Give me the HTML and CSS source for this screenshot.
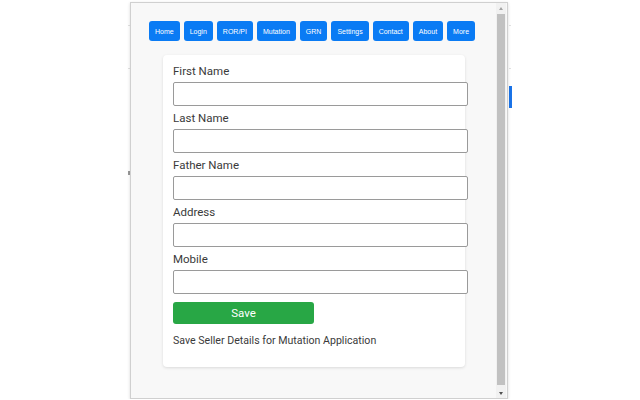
FILE: index.html
```html
<!DOCTYPE html>
<html>
<head>
  <meta charset="utf-8">
  <title>Mutation - Seller Details</title>
  <link rel="stylesheet" href="styles.css">
</head>

<body>
  <!-- bits of the page behind the popup -->
  <div class="bg-mark mark-l1"></div>
  <div class="bg-mark mark-l2"></div>
  <div class="bg-mark mark-l3"></div>
  <div class="bg-mark mark-r1"></div>
  <div class="bg-mark mark-r2"></div>
  <div class="bg-tab"></div>

  <div class="popup">
    <div class="popup-body">
      <nav class="nav">
        <button class="nav-btn">Home</button>
        <button class="nav-btn">Login</button>
        <button class="nav-btn">ROR/PI</button>
        <button class="nav-btn">Mutation</button>
        <button class="nav-btn">GRN</button>
        <button class="nav-btn">Settings</button>
        <button class="nav-btn">Contact</button>
        <button class="nav-btn">About</button>
        <button class="nav-btn">More</button>
      </nav>

      <form class="card" id="seller-form">
        <div class="form-group">
          <label for="first-name">First Name</label>
          <input type="text" id="first-name" name="firstName">
        </div>
        <div class="form-group">
          <label for="last-name">Last Name</label>
          <input type="text" id="last-name" name="lastName">
        </div>
        <div class="form-group">
          <label for="father-name">Father Name</label>
          <input type="text" id="father-name" name="fatherName">
        </div>
        <div class="form-group">
          <label for="address">Address</label>
          <input type="text" id="address" name="address">
        </div>
        <div class="form-group">
          <label for="mobile">Mobile</label>
          <input type="text" id="mobile" name="mobile">
        </div>

        <button type="submit" class="save-btn">Save</button>
        <div class="note">Save Seller Details for Mutation Application</div>
      </form>
    </div>

    <div class="scrollbar">
      <div class="arrow arrow-up"></div>
      <div class="thumb"></div>
      <div class="arrow arrow-down"></div>
    </div>
  </div>
</body>
</html>
```

FILE: styles.css
```css
body {
  margin: 0;
  padding: 2px 0 0 130px;
  background-color: white;
  font-family: Roboto, "Liberation Sans", Arial, sans-serif;
  color: #333;
}

.bg-mark {
  position: absolute;
  width: 2px;
  height: 1px;
  background-color: #e2e2e2;
}

.mark-l1 { left: 128px; top: 25px; }
.mark-l2 { left: 128px; top: 68px; }
.mark-l3 { left: 128px; top: 171px; height: 4px; background-color: #999; }
.mark-r1 { left: 509px; top: 25px; }
.mark-r2 { left: 509px; top: 68px; }

.bg-tab {
  position: absolute;
  left: 509px;
  top: 86px;
  width: 3px;
  height: 22px;
  background-color: #1a73e8;
}

.popup {
  position: relative;
  display: flex;
  width: 376px;
  height: 395px;
  background-color: #f8f8f8;
  border: 1px solid #d0d0d0;
  box-shadow: 0 1px 3px rgba(0, 0, 0, 0.15);
}

.popup-body {
  flex: 1;
  padding-top: 18px;
  overflow: hidden;
}

.nav {
  display: flex;
  gap: 4px;
  margin-left: 18px;
}

.nav-btn {
  height: 20px;
  padding: 0 6px;
  border: none;
  border-radius: 3px;
  background-color: #0a7bf4;
  color: white;
  font-family: "Liberation Sans", Arial, sans-serif;
  font-size: 7px;
}

.card {
  width: 282px;
  margin: 14px 0 0 32px;
  padding: 9px 10px 19px 10px;
  background-color: white;
  border-radius: 4px;
  box-shadow: 0 1px 3px rgba(0, 0, 0, 0.12);
}

.form-group {
  margin-bottom: 5px;
}

.form-group:last-of-type {
  margin-bottom: 0;
}

label {
  display: block;
  font-size: 11.5px;
  line-height: 14px;
  margin-bottom: 4px;
  color: #3a3a3a;
}

input[type="text"] {
  display: block;
  width: 295px;
  height: 24px;
  margin: 0;
  padding: 0 6px;
  border: 1px solid #9a9a9a;
  border-radius: 2px;
  box-sizing: border-box;
  background-color: white;
}

.save-btn {
  display: block;
  width: 141px;
  height: 22px;
  margin-top: 8px;
  border: none;
  border-radius: 3px;
  background-color: #28a745;
  color: white;
  font-family: Roboto, "Liberation Sans", Arial, sans-serif;
  font-size: 11.5px;
}

.note {
  margin-top: 10px;
  font-size: 10.6px;
  line-height: 14px;
  color: #3a3a3a;
}

.scrollbar {
  display: flex;
  flex-direction: column;
  width: 10px;
  margin-right: 1px;
  background-color: #f1f1f1;
}

.arrow {
  position: relative;
  height: 11px;
}

.arrow-up::after,
.arrow-down::after {
  content: "";
  position: absolute;
  left: 3px;
  border-left: 2px solid transparent;
  border-right: 2px solid transparent;
}

.arrow-up::after {
  top: 4px;
  border-bottom: 3px solid #a3a3a3;
}

.arrow-down::after {
  top: 5px;
  border-top: 3px solid #505050;
}

.thumb {
  flex: 1;
  margin: 0 1px 2px 1px;
  background-color: #c1c1c1;
}
```
